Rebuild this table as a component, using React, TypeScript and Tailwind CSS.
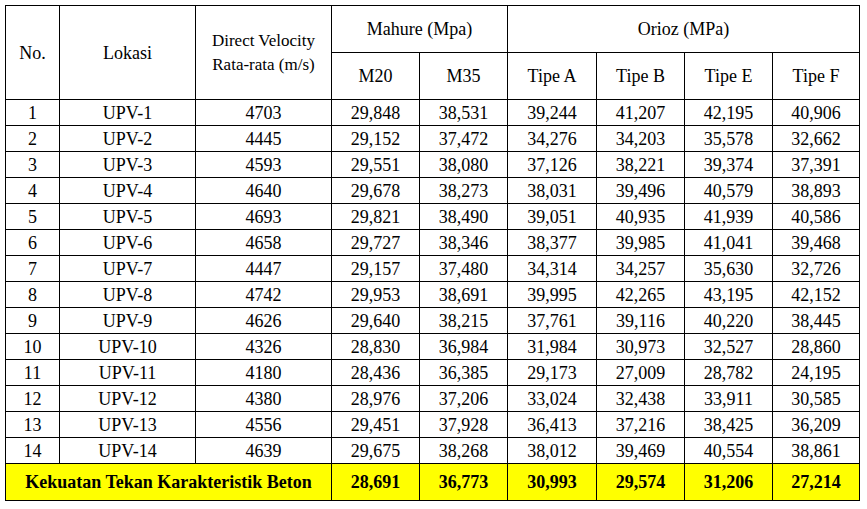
import React from 'react';

type Row = {
  no: number;
  lokasi: string;
  velocity: number;
  values: string[];
};

const rows: Row[] = [
  { no: 1, lokasi: 'UPV-1', velocity: 4703, values: ['29,848', '38,531', '39,244', '41,207', '42,195', '40,906'] },
  { no: 2, lokasi: 'UPV-2', velocity: 4445, values: ['29,152', '37,472', '34,276', '34,203', '35,578', '32,662'] },
  { no: 3, lokasi: 'UPV-3', velocity: 4593, values: ['29,551', '38,080', '37,126', '38,221', '39,374', '37,391'] },
  { no: 4, lokasi: 'UPV-4', velocity: 4640, values: ['29,678', '38,273', '38,031', '39,496', '40,579', '38,893'] },
  { no: 5, lokasi: 'UPV-5', velocity: 4693, values: ['29,821', '38,490', '39,051', '40,935', '41,939', '40,586'] },
  { no: 6, lokasi: 'UPV-6', velocity: 4658, values: ['29,727', '38,346', '38,377', '39,985', '41,041', '39,468'] },
  { no: 7, lokasi: 'UPV-7', velocity: 4447, values: ['29,157', '37,480', '34,314', '34,257', '35,630', '32,726'] },
  { no: 8, lokasi: 'UPV-8', velocity: 4742, values: ['29,953', '38,691', '39,995', '42,265', '43,195', '42,152'] },
  { no: 9, lokasi: 'UPV-9', velocity: 4626, values: ['29,640', '38,215', '37,761', '39,116', '40,220', '38,445'] },
  { no: 10, lokasi: 'UPV-10', velocity: 4326, values: ['28,830', '36,984', '31,984', '30,973', '32,527', '28,860'] },
  { no: 11, lokasi: 'UPV-11', velocity: 4180, values: ['28,436', '36,385', '29,173', '27,009', '28,782', '24,195'] },
  { no: 12, lokasi: 'UPV-12', velocity: 4380, values: ['28,976', '37,206', '33,024', '32,438', '33,911', '30,585'] },
  { no: 13, lokasi: 'UPV-13', velocity: 4556, values: ['29,451', '37,928', '36,413', '37,216', '38,425', '36,209'] },
  { no: 14, lokasi: 'UPV-14', velocity: 4639, values: ['29,675', '38,268', '38,012', '39,469', '40,554', '38,861'] },
];

const totals = ['28,691', '36,773', '30,993', '29,574', '31,206', '27,214'];

const colWidths = ['w-[54px]', 'w-[136px]', 'w-[136px]', 'w-[88px]', 'w-[88px]', 'w-[89px]', 'w-[88px]', 'w-[88px]', 'w-[87px]'];

// font set on each cell so the table never falls back to the page default
const cell =
  "border border-black text-center align-middle p-0 text-black text-[18px] leading-[20px] font-['Liberation_Serif',serif]";

export default function App() {
  return (
    <div className="w-[867px] h-[509px] bg-white pl-[5px] pt-[5px]">
      <table className="table-fixed border-collapse w-[855px]">
        <colgroup>
          {colWidths.map((w, i) => (
            <col key={i} className={w} />
          ))}
        </colgroup>
        <thead>
          <tr className="h-[47px]">
            <th rowSpan={2} className={`${cell} font-normal`}>No.</th>
            <th rowSpan={2} className={`${cell} font-normal`}>Lokasi</th>
            <th rowSpan={2} className={`${cell} font-normal`}>
              <div className="leading-[24px] text-[17px]">Direct Velocity</div>
              <div className="leading-[24px] text-[17px]">Rata-rata (m/s)</div>
            </th>
            <th colSpan={2} className={`${cell} font-normal`}>Mahure (Mpa)</th>
            <th colSpan={4} className={`${cell} font-normal`}>Orioz (MPa)</th>
          </tr>
          <tr className="h-[47px]">
            <th className={`${cell} font-normal`}>M20</th>
            <th className={`${cell} font-normal`}>M35</th>
            <th className={`${cell} font-normal`}>Tipe A</th>
            <th className={`${cell} font-normal`}>Tipe B</th>
            <th className={`${cell} font-normal`}>Tipe E</th>
            <th className={`${cell} font-normal`}>Tipe F</th>
          </tr>
        </thead>
        <tbody>
          {rows.map((r) => (
            <tr key={r.no} className="h-[26px]">
              <td className={cell}>{r.no}</td>
              <td className={cell}>{r.lokasi}</td>
              <td className={cell}>{r.velocity}</td>
              {r.values.map((v, i) => (
                <td key={i} className={cell}>{v}</td>
              ))}
            </tr>
          ))}
          {/* Summary row */}
          <tr className="h-[37px] bg-[#ffff00]">
            <td colSpan={3} className={`${cell} font-bold`}>Kekuatan Tekan Karakteristik Beton</td>
            {totals.map((t, i) => (
              <td key={i} className={`${cell} font-bold`}>{t}</td>
            ))}
          </tr>
        </tbody>
      </table>
    </div>
  );
}
